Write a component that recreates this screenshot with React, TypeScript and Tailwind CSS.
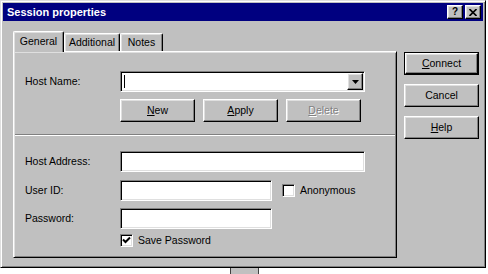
import type { ReactNode } from "react";

const raised =
  "border border-t-white border-l-white border-r-black border-b-black shadow-[inset_-1px_-1px_0_#808080,inset_1px_1px_0_#dfdfdf]";
const sunken =
  "border border-t-[#808080] border-l-[#808080] border-r-white border-b-white shadow-[inset_1px_1px_0_#000,inset_-1px_-1px_0_#dfdfdf]";

function Btn({ children, wide = false, def = false }: { children: ReactNode; wide?: boolean; def?: boolean }) {
  if (def) {
    return (
      <div className="w-[75px] h-[23px] border border-black">
        <div className={`w-full h-full flex items-center justify-center ${raised}`}>{children}</div>
      </div>
    );
  }
  return (
    <div className={`${wide ? "w-[75px]" : "w-[75px]"} h-[23px] flex items-center justify-center ${raised}`}>
      {children}
    </div>
  );
}

function Field({ w }: { w: string }) {
  return <div className={`${w} h-[21px] bg-white ${sunken}`} />;
}

function Check({ checked }: { checked?: boolean }) {
  return (
    <div className={`w-[13px] h-[13px] bg-white p-[1px] flex items-center justify-center ${sunken}`}>
      {checked && (
        <svg width="9" height="9" viewBox="0 0 9 9">
          <path d="M1 3.5 L3.5 6 L8 1.5" stroke="#000" strokeWidth="2" fill="none" />
        </svg>
      )}
    </div>
  );
}

function Row({ label, children, className = "" }: { label: string; children: ReactNode; className?: string }) {
  return (
    <div className={`flex items-center ${className}`}>
      <div className="w-[106px] pl-[11px]">{label}</div>
      {children}
    </div>
  );
}

export default function App() {
  return (
    <div className="w-[488px] h-[274px] bg-white overflow-hidden font-['Liberation_Sans',Arial,sans-serif] text-[10.5px] text-black leading-none">
      <div className="w-[486px] bg-[#c0c0c0] p-[2px] border border-t-[#dfdfdf] border-l-[#dfdfdf] border-r-black border-b-black shadow-[inset_1px_1px_0_#fff,inset_-1px_-1px_0_#808080]">
        {/* title bar */}
        <div className="h-[18px] bg-[#000080] flex items-center justify-between pl-[4px] pr-[2px]">
          <span className="text-white font-bold text-[11px]">Session properties</span>
          <div className="flex gap-[2px]">
            <div className={`w-[16px] h-[14px] bg-[#c0c0c0] flex items-center justify-center font-bold text-[10px] ${raised}`}>
              ?
            </div>
            <div className={`w-[16px] h-[14px] bg-[#c0c0c0] flex items-center justify-center ${raised}`}>
              <svg width="8" height="7" viewBox="0 0 8 7">
                <path d="M0.5 0 L7.5 7 M7.5 0 L0.5 7" stroke="#000" strokeWidth="1.6" />
              </svg>
            </div>
          </div>
        </div>

        <div className="flex pt-[10px] pl-[10px] pb-[7px]">
          {/* tab control */}
          <div className="w-[384px]">
            <div className="h-[20px] flex items-end">
              <div className="relative z-10 w-[51px] h-[21px] -mb-[1px] bg-[#c0c0c0] rounded-t-[2px] border border-b-0 border-t-white border-l-white border-r-black shadow-[inset_-1px_0_0_#808080,inset_1px_1px_0_#dfdfdf] flex items-center justify-center pb-[1px]">
                General
              </div>
              <div className="w-[56px] h-[18px] rounded-t-[2px] border border-b-0 border-t-white border-l-white border-r-black shadow-[inset_-1px_0_0_#808080,inset_1px_1px_0_#dfdfdf] flex items-center justify-center">
                Additional
              </div>
              <div className="w-[43px] h-[18px] rounded-t-[2px] border border-b-0 border-t-white border-l-white border-r-black shadow-[inset_-1px_0_0_#808080,inset_1px_1px_0_#dfdfdf] flex items-center justify-center">
                Notes
              </div>
            </div>
            <div className="h-[207px] border border-t-white border-l-white border-r-black border-b-black shadow-[inset_1px_1px_0_#dfdfdf,inset_-1px_-1px_0_#808080] pt-[19px]">
              <Row label="Host Name:">
                <div className={`relative w-[245px] h-[21px] bg-white p-[1px] flex justify-end ${sunken}`}>
                  <div className="absolute left-[3px] top-[3px] w-[1px] h-[13px] bg-black" />
                  <div className={`w-[16px] h-[17px] bg-[#c0c0c0] flex items-center justify-center ${raised}`}>
                    <svg width="7" height="4" viewBox="0 0 7 4">
                      <polygon points="0,0 7,0 3.5,4" fill="#000" />
                    </svg>
                  </div>
                </div>
              </Row>
              <div className="mt-[7px] pl-[106px] flex gap-[8px]">
                <Btn>
                  <span className="underline">N</span>ew
                </Btn>
                <Btn>
                  <span className="underline">A</span>pply
                </Btn>
                <Btn>
                  <span className="text-[#808080] [text-shadow:1px_1px_0_#fff]">
                    <span className="underline">D</span>elete
                  </span>
                </Btn>
              </div>
              <div className="mt-[12px] mx-[1px] h-[2px] border-t border-t-[#808080] border-b border-b-white" />
              <Row label="Host Address:" className="mt-[15px]">
                <Field w="w-[245px]" />
              </Row>
              <Row label="User ID:" className="mt-[8px]">
                <Field w="w-[152px]" />
                <div className="ml-[10px]">
                  <Check />
                </div>
                <span className="ml-[5px]">Anonymous</span>
              </Row>
              <Row label="Password:" className="mt-[7px]">
                <Field w="w-[152px]" />
              </Row>
              <div className="mt-[5px] pl-[106px] flex items-center">
                <Check checked />
                <span className="ml-[5px]">Save Password</span>
              </div>
            </div>
          </div>

          {/* side buttons */}
          <div className="ml-[7px] pt-[21px] flex flex-col gap-[9px]">
            <Btn def>
              <span className="underline">C</span>onnect
            </Btn>
            <Btn>Cancel</Btn>
            <Btn>
              <span className="underline">H</span>elp
            </Btn>
          </div>
        </div>
      </div>
      <div className="h-[6px] flex">
        <div className="ml-[230px] w-[29px] h-full bg-[#c0c0c0] border-x border-[#404040]" />
      </div>
    </div>
  );
}
